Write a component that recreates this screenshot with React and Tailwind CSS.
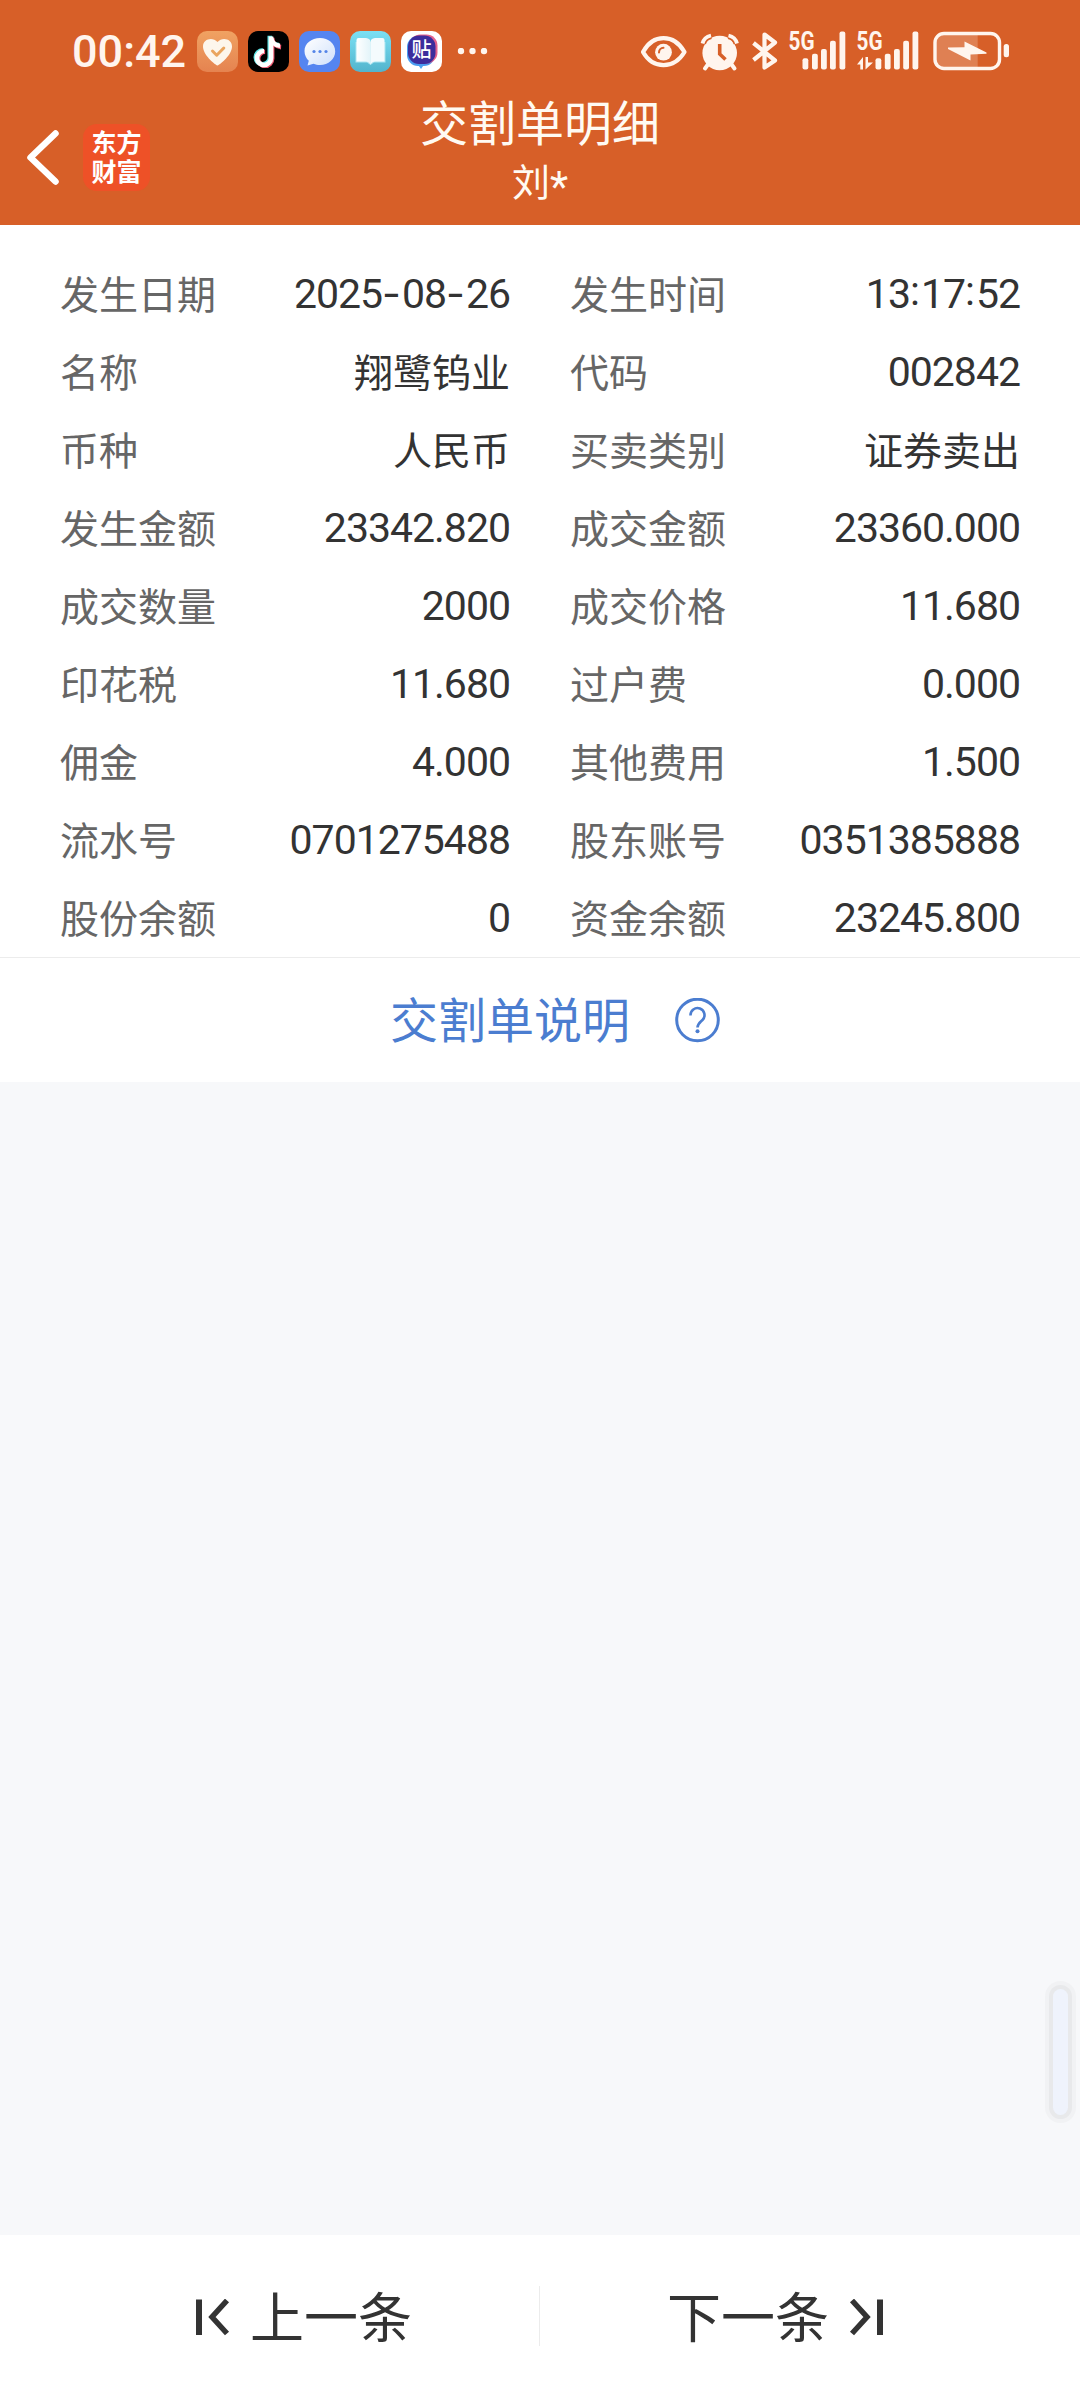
import { Fragment } from 'react';

const rows = [
  ['发生日期', '2025-08-26', '发生时间', '13:17:52'],
  ['名称', '翔鹭钨业', '代码', '002842'],
  ['币种', '人民币', '买卖类别', '证券卖出'],
  ['发生金额', '23342.820', '成交金额', '23360.000'],
  ['成交数量', '2000', '成交价格', '11.680'],
  ['印花税', '11.680', '过户费', '0.000'],
  ['佣金', '4.000', '其他费用', '1.500'],
  ['流水号', '0701275488', '股东账号', '0351385888'],
  ['股份余额', '0', '资金余额', '23245.800'],
];

function AppIcons() {
  return (
    <div className="flex gap-[10px] ml-3">
      {/* Health */}
      <svg width="41" height="41" viewBox="0 0 41 41">
        <defs>
          <linearGradient id="health" x1="0" y1="0" x2="0" y2="1">
            <stop offset="0" stopColor="#f0a262" />
            <stop offset="1" stopColor="#e58350" />
          </linearGradient>
        </defs>
        <rect width="41" height="41" rx="10" fill="url(#health)" />
        <path d="M20.5 34.5C17 33 6 23.5 6 15.5C6 8 15.5 5.5 20.5 11C25.5 5.5 35 8 35 15.5C35 23.5 24 33 20.5 34.5Z" fill="#fdf6ec" />
        <path d="M15.5 20L19.7 24.2L26.8 17" fill="none" stroke="#eaa55f" strokeWidth="3" strokeLinecap="round" strokeLinejoin="round" />
      </svg>
      {/* Short video */}
      <svg width="41" height="41" viewBox="0 0 41 41">
        <rect width="41" height="41" rx="10" fill="#000" />
        <g fill="none" strokeWidth="4.6">
          <path d="M22.3 4.5V26a7 7 0 1 1-7-7M22.3 5c.5 5 4 8.500 9 8.800" stroke="#5fe3e4" transform="translate(-.5 .3)" />
          <path d="M23.8 6.5V27.5a7 7 0 1 1-7-7M23.8 7c.5 5 4 8.500 9 8.800" stroke="#ee5a72" transform="translate(.3 .3)" />
          <path d="M23 5.5V27a7 7 0 1 1-7-7M23 6c.5 5 4 8.500 9 8.800" stroke="#fff" />
        </g>
      </svg>
      {/* Messages */}
      <svg width="41" height="41" viewBox="0 0 41 41">
        <defs>
          <linearGradient id="bubble" x1="0" y1="0" x2="1" y2="1">
            <stop offset="0" stopColor="#fff" />
            <stop offset="1" stopColor="#cfe0fb" />
          </linearGradient>
        </defs>
        <rect width="41" height="41" rx="10" fill="#5585f0" />
        <path d="M21 7C12.5 7 5.5 12.5 5.5 20C5.5 24.2 7.3 27.5 9.8 29.8L8.5 34.5L14.5 32.8C16.5 33.7 18.7 34 21 34C29.5 34 36.2 28 36.2 20.5C36.2 12.5 29.5 7 21 7Z" fill="url(#bubble)" />
        <circle cx="15" cy="20.5" r="1.6" fill="#5585e8" />
        <circle cx="21" cy="20.5" r="1.6" fill="#5585e8" />
        <circle cx="27" cy="20.5" r="1.6" fill="#5585e8" />
      </svg>
      {/* Reader */}
      <svg width="41" height="41" viewBox="0 0 41 41">
        <defs>
          <linearGradient id="reader" x1="0" y1="0" x2="0" y2="1">
            <stop offset="0" stopColor="#7be0f4" />
            <stop offset="1" stopColor="#52b4cd" />
          </linearGradient>
          <linearGradient id="page" x1="0" y1="0" x2="1" y2="0">
            <stop offset="0" stopColor="#fff" />
            <stop offset="1" stopColor="#e3f4f9" />
          </linearGradient>
        </defs>
        <rect width="41" height="41" rx="10" fill="url(#reader)" />
        <path d="M5.5 11H35.5V31.5H24L20.5 34L17 31.5H5.5Z" fill="#a9e4f0" />
        <path d="M6.5 9Q6.5 7 8.5 7H16Q20.5 7.5 20.5 11V33.5Q19 30.5 15.5 30.5H6.5Z" fill="url(#page)" />
        <path d="M34.5 9Q34.5 7 32.5 7H25Q20.5 7.5 20.5 11V33.5Q22 30.5 25.5 30.5H34.5Z" fill="#f4fbfd" />
      </svg>
      {/* Forum */}
      <svg width="41" height="41" viewBox="0 0 41 41">
        <rect width="41" height="41" rx="10" fill="#fff" />
        <path d="M16.5 33H23.5L20 38Z" fill="#4aa5f2" />
        <rect x="6" y="5" width="28" height="30" rx="11" fill="#4a9cf0" />
        <rect x="8.5" y="3.5" width="28" height="29" rx="11" fill="#e3628d" />
        <rect x="7" y="4.5" width="27.5" height="28.5" rx="11" fill="#3c2d9c" />
        <text x="20.5" y="26" textAnchor="middle" fontSize="20" fill="#fff" className="font-['Noto_Sans_CJK_SC',sans-serif] font-medium">贴</text>
      </svg>
    </div>
  );
}

function Signal({ bars }) {
  const tops = [58.2, 53.7, 49, 40.7, 31.5];
  return bars.map((x, i) => (
    <rect key={x} x={x} y={tops[i]} width="5.8" height={69.5 - tops[i]} rx="2" />
  ));
}

function SystemIcons() {
  return (
    <svg width="370" height="61" viewBox="640 21 370 61" fill="#fff5ee" className="ml-auto">
      {/* Eye comfort */}
      <path d="M643 52C653 33.5 674 33.5 684.5 52C674 69.5 653 69.5 643 52Z" fill="none" stroke="#fff5ee" strokeWidth="4.2" strokeLinejoin="round" />
      <circle cx="663.5" cy="52.2" r="8.4" />
      <path d="M659 52.5a4.8 4.8 0 0 1 4.5-4.8" fill="none" stroke="#d75f28" strokeWidth="2" strokeLinecap="round" />

      {/* Alarm */}
      <circle cx="719.7" cy="53" r="17.3" />
      <path d="M702.5 43.5Q704 37 711 35.5M737 43.5Q735.5 37 728.5 35.5" fill="none" stroke="#d75f28" strokeWidth="7" />
      <path d="M702.5 43.5Q704 37 711 35.5M737 43.5Q735.5 37 728.5 35.5" fill="none" stroke="#fff5ee" strokeWidth="3.8" />
      <path d="M709 63L705 68.5M730.5 63L734.5 68.5" stroke="#fff5ee" strokeWidth="4" strokeLinecap="round" />
      <path d="M719.7 44V54L725.5 59.5" fill="none" stroke="#d75f28" strokeWidth="3.6" />

      {/* Bluetooth */}
      <path d="M753.5 43L775 60.5L764.5 67.5V34.5L775 42.5L753.5 60" fill="none" stroke="#fff5ee" strokeWidth="4.2" strokeLinejoin="round" />

      {/* SIM 1 */}
      <text x="788.5" y="50" fontSize="25" textLength="26" lengthAdjust="spacingAndGlyphs" className="font-[Roboto,sans-serif] font-bold">5G</text>
      <Signal bars={[802.5, 812, 821, 830, 839.5]} />

      {/* SIM 2 */}
      <text x="856.5" y="50" fontSize="25" textLength="26" lengthAdjust="spacingAndGlyphs" className="font-[Roboto,sans-serif] font-bold">5G</text>
      <path d="M857 64.5L863 57V69.5H860.3V64.5ZM865.5 57H868V62.5H873L865.5 69.5Z" />
      <Signal bars={[875.5, 884.8, 894, 903.2, 912.5]} />

      {/* Battery */}
      <path d="M943 33.5H977.7V68.5H943Q935 68.5 935 60V42Q935 33.5 943 33.5Z" opacity=".22" />
      <rect x="935" y="33.5" width="64.5" height="35" rx="9" fill="none" stroke="#fff5ee" strokeWidth="3.4" />
      <rect x="1003.7" y="44" width="5.3" height="13.3" rx="2.5" />
      <path d="M948 47.5L964.5 47.3V41.5L986.5 52.5V53.7L970.5 54.5V60.5L948 49Z" strokeLinejoin="round" />
    </svg>
  );
}

// The separators in dates and times sit at the middle of the digits
function Value({ text }) {
  const numeric = /^[\d.:-]+$/.test(text);
  if (!numeric) {
    return <span className="pb-1 text-[39px] text-[#333333]">{text}</span>;
  }
  return (
    <span className="font-[Roboto,sans-serif] text-[41px] tracking-[-1px] text-[#333333]">
      {text.split(/([-:])/).map((part, i) => {
        if (part === '-') return <span key={i} className="mr-px font-[Inter,sans-serif] tracking-normal">-</span>;
        if (part === ':') return <span key={i} className="mr-px inline-block -translate-y-[3px] tracking-normal">:</span>;
        return <Fragment key={i}>{part}</Fragment>;
      })}
    </span>
  );
}

function Field({ label, value }) {
  return (
    <div className="flex h-[78px] items-center justify-between">
      <span className="pb-1 text-[39px] text-[#666666]">{label}</span>
      <Value text={value} />
    </div>
  );
}

function App() {
  return (
    <div className="flex h-[2400px] w-[1080px] flex-col bg-[#f7f8fa] font-['Noto_Sans_CJK_SC',sans-serif] leading-none">
      <header className="h-[225px] bg-[#d75f28] text-[#fffaf2]">
        {/* Status bar */}
        <div className="flex h-[90px] items-center pt-[13px] pl-[72px] pr-[70px]">
          <span className="w-[113px] font-[Roboto,sans-serif] text-[45px] font-medium text-[#fff5ee]">00:42</span>
          <AppIcons />
          <svg width="32" height="8" viewBox="0 0 32 8" fill="#fff5ee" className="ml-[15px]">
            <circle cx="4" cy="3" r="3.2" />
            <circle cx="15.5" cy="3" r="3.2" />
            <circle cx="27" cy="3" r="3.2" />
          </svg>
          <SystemIcons />
        </div>

        {/* Title bar */}
        <div className="grid h-[135px] grid-cols-[270px_1fr_270px]">
          <div className="flex items-center pl-[25px]">
            <svg width="36" height="60" viewBox="0 0 36 60" fill="none" stroke="#fff" strokeWidth="6.5" strokeLinecap="round" strokeLinejoin="round">
              <path d="M30.5 5.5L5.5 29.5L30.5 53.500" />
            </svg>
            <div className="ml-[22px] flex h-[67px] w-[67px] items-center justify-center rounded-[14px] bg-[#ee5127] pb-1">
              <span className="w-[50px] break-all text-[25px] font-bold leading-[29px] text-white">东方财富</span>
            </div>
          </div>
          <div className="text-center">
            <h1 className="text-[48px] leading-[61px]">交割单明细</h1>
            <p className="text-[38px] leading-[58px]">
              刘<span className="inline-block translate-y-[5px] font-[Roboto,sans-serif] text-[42px] leading-none">*</span>
            </p>
          </div>
        </div>
      </header>

      <section className="grid grid-cols-2 gap-x-[60px] border-b border-[#ececec] bg-white px-[60px] pt-[30px]">
        {rows.map(([l1, v1, l2, v2]) => (
          <Fragment key={l1}>
            <Field label={l1} value={v1} />
            <Field label={l2} value={v2} />
          </Fragment>
        ))}
      </section>

      <div className="flex h-[124px] items-center justify-center gap-[45px] bg-white pl-[30px] text-[#4b7dd0]">
        <span className="pb-1.5 text-[48px]">交割单说明</span>
        <svg width="45" height="45" viewBox="0 0 45 45" fill="none" stroke="currentColor" strokeWidth="3">
          <circle cx="22.5" cy="22" r="20.8" />
          <path d="M15.5 17.5a7 7 0 1 1 12 4.500c-2.500 2.500-5 4-5 7.500" strokeWidth="2.600" />
          <circle cx="22.5" cy="33.300" r="2" fill="currentColor" stroke="none" />
        </svg>
      </div>

      {/* Scroll handle */}
      <div className="flex flex-1 justify-end pr-3 pt-[907px]">
        <div className="h-[126px] w-[15px] rounded-full bg-[#eff3fc] shadow-[0_0_0_4px_#e8e9eb,0_0_0_8px_#f1f2f4]" />
      </div>

      <footer className="flex h-[165px] items-center bg-white text-[54px] text-[#333333]">
        <button className="flex w-[539px] items-center pl-[195px]">
          <svg width="36" height="37" viewBox="0 0 36 37" fill="none" stroke="currentColor" strokeWidth="6">
            <path d="M4 .5V36" />
            <path d="M32 1.5L17 18L32 34.500" strokeWidth="5.5" />
          </svg>
          <span className="ml-[19px] pb-1.5">上一条</span>
        </button>
        <div className="mb-1 h-[60px] w-px bg-[#ececec]" />
        <button className="flex flex-1 items-center justify-end pr-[196px]">
          <span className="mr-[19px] pb-1.5">下一条</span>
          <svg width="36" height="37" viewBox="0 0 36 37" fill="none" stroke="currentColor" strokeWidth="6">
            <path d="M32 .5V36" />
            <path d="M4 1.5L19 18L4 34.500" strokeWidth="5.5" />
          </svg>
        </button>
      </footer>
    </div>
  );
}

export default App;
